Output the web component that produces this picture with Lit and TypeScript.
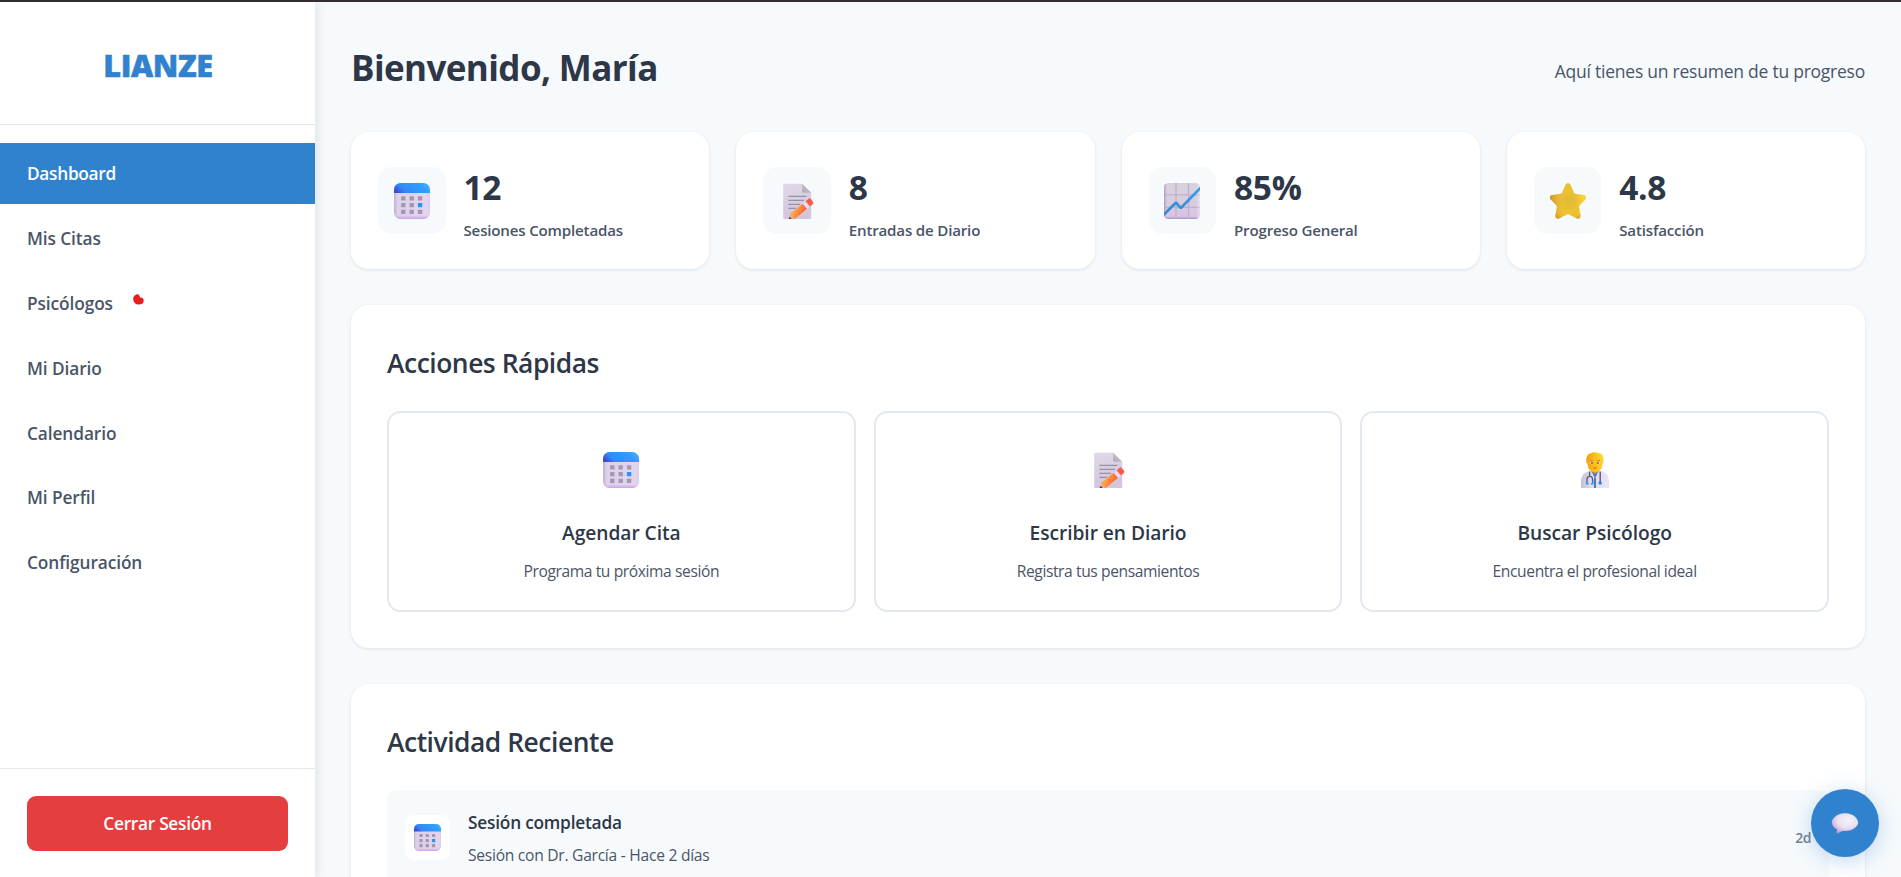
import { LitElement, html, css, svg } from "lit";
import { customElement, property } from "lit/decorators.js";
import { classMap } from "lit/directives/class-map.js";

type IconName = "calendar" | "memo" | "chart" | "star" | "doctor" | "bubble";

const calendarDots = [0, 1, 2].flatMap((r) =>
  [0, 1, 2].map((c) => ({ x: 7.1 + c * 8.4, y: 13.2 + r * 6.8, today: r === 1 && c === 2 }))
);

const glyphs: Record<IconName, unknown> = {
  calendar: svg`
    <defs>
      <linearGradient id="head" x1="0" y1="0.6" x2="1" y2="0.3">
        <stop offset="0" stop-color="#3a4fcf" /><stop offset="0.22" stop-color="#3387f6" />
        <stop offset="0.8" stop-color="#2fa0ff" /><stop offset="1" stop-color="#3fb8fb" />
      </linearGradient>
      <linearGradient id="sheet" x1="0" y1="0" x2="1" y2="0">
        <stop offset="0" stop-color="#bdb2cb" /><stop offset="0.1" stop-color="#dcd2ea" />
        <stop offset="0.9" stop-color="#e3d5ee" /><stop offset="1" stop-color="#ddcdea" />
      </linearGradient>
      <linearGradient id="foot" x1="0" y1="0" x2="0" y2="1">
        <stop offset="0.9" stop-color="#cf9fea" stop-opacity="0" /><stop offset="1" stop-color="#cf9fea" />
      </linearGradient>
      <clipPath id="round"><rect width="36" height="36" rx="6.5" /></clipPath>
    </defs>
    <g clip-path="url(#round)">
      <rect width="36" height="36" fill="url(#sheet)" />
      <rect width="36" height="36" fill="url(#foot)" />
      <rect width="36" height="10" fill="url(#head)" />
    </g>
    ${calendarDots.map(
      (d) => svg`<rect x=${d.x} y=${d.y} width="4.4" height="4.2" rx="0.5" fill=${d.today ? "#2c93f3" : "#a597b4"} />`
    )}`,
  memo: svg`
    <defs>
      <linearGradient id="page" x1="0" y1="0" x2="0.2" y2="1">
        <stop offset="0" stop-color="#e0d9e8" /><stop offset="1" stop-color="#d2c5dc" />
      </linearGradient>
      <linearGradient id="fold" x1="0" y1="1" x2="1" y2="0">
        <stop offset="0" stop-color="#aea6b6" /><stop offset="1" stop-color="#d3ccda" />
      </linearGradient>
      <linearGradient id="wood" x1="0" y1="0" x2="1" y2="1">
        <stop offset="0.2" stop-color="#ffa348" /><stop offset="0.85" stop-color="#fb6b2e" />
      </linearGradient>
      <clipPath id="memo-area"><rect width="36" height="36" /></clipPath>
    </defs>
    <path d="M5.2 0.7H23.2L32.2 9.7V35a1 1 0 0 1-1 1H5.2a1 1 0 0 1-1-1V1.7a1 1 0 0 1 1-1Z" fill="url(#page)" />
    <path d="M23.2 0.7L32.2 9.7H24.2a1 1 0 0 1-1-1Z" fill="url(#fold)" />
    <path d="M9.4 13.4H27.4M9.4 17.4H25M9.4 21.4H21M9.4 25.4H17" stroke="#9890a3" stroke-width="1.1" />
    <g clip-path="url(#memo-area)">
      <g transform="translate(9.6 36.6) rotate(-39.5)">
        <path d="M0 0L5.6-3.4V3.4Z" fill="#e3ab98" />
        <path d="M0 0L2.6-1.6V1.6Z" fill="#50273f" />
        <rect x="5" y="-3.4" width="16.2" height="6.8" fill="url(#wood)" />
        <rect x="21" y="-3.4" width="3.8" height="6.8" fill="#e9dcf5" />
        <path d="M24.8-3.4h3.6a1.9 1.9 0 0 1 1.9 1.9V1.5a1.9 1.9 0 0 1-1.9 1.9H24.8Z" fill="#fb5b4c" />
      </g>
    </g>`,
  chart: svg`
    <defs>
      <linearGradient id="paper" x1="0" y1="0" x2="0" y2="1">
        <stop offset="0" stop-color="#d8d2dd" /><stop offset="0.4" stop-color="#d8cee2" />
        <stop offset="0.93" stop-color="#d6c4e3" /><stop offset="1" stop-color="#ad8cc9" />
      </linearGradient>
      <linearGradient id="edge" x1="0" y1="0" x2="1" y2="0">
        <stop offset="0" stop-color="#a79bb0" stop-opacity="0.9" /><stop offset="0.09" stop-color="#b7acc0" stop-opacity="0" />
        <stop offset="0.9" stop-color="#fff" stop-opacity="0" /><stop offset="1" stop-color="#efe7f4" stop-opacity="0.6" />
      </linearGradient>
      <linearGradient id="trend" x1="0" y1="1" x2="1" y2="0">
        <stop offset="0" stop-color="#3a83cf" /><stop offset="1" stop-color="#31a2ea" />
      </linearGradient>
      <clipPath id="tile"><rect width="36" height="36" rx="4.6" /></clipPath>
    </defs>
    <g clip-path="url(#tile)">
      <rect width="36" height="36" fill="url(#paper)" />
      <path d="M12 0V36M24.6 0V36M0 11.8H36M0 24.4H36" stroke="#bdb1c8" stroke-width="1.3" />
      <rect width="36" height="36" fill="url(#edge)" />
      <path d="M-1 32.4L11.3 20.2Q12 19.6 12.7 20.3L16 24.2Q16.8 25 17.6 24.2L37 4.4" fill="none" stroke="url(#trend)" stroke-width="2.7" />
    </g>`,
  star: svg`
    <defs>
      <radialGradient id="gold" cx="0.52" cy="0.5" r="0.55">
        <stop offset="0" stop-color="#dfba36" /><stop offset="0.55" stop-color="#edc233" />
        <stop offset="0.85" stop-color="#eebd33" /><stop offset="1" stop-color="#d79f30" />
      </radialGradient>
      <linearGradient id="shade" x1="0" y1="0" x2="1" y2="0">
        <stop offset="0" stop-color="#c48a2c" stop-opacity="0.75" /><stop offset="0.35" stop-color="#d9a52f" stop-opacity="0" />
        <stop offset="0.75" stop-color="#ffe23c" stop-opacity="0" /><stop offset="1" stop-color="#ffe838" stop-opacity="0.7" />
      </linearGradient>
    </defs>
    <path d="M15.4 2C16.4-0.5 19.6-0.5 20.6 2L24 9.6Q24.6 10.8 25.9 11L33.7 12C36.2 12.4 36.8 15 35 16.8L29.8 22.3Q28.9 23.3 29.2 24.6L30.6 32.2C31 35.2 28.6 36.6 26.2 35.3L19.5 31.7Q18 30.9 16.5 31.7L9.8 35.3C7.4 36.6 5 35.2 5.4 32.2L6.8 24.6Q7.1 23.3 6.2 22.3L1 16.8C-0.8 15-0.2 12.4 2.3 12L10.1 11Q11.4 10.8 12 9.6Z" fill="url(#gold)" />
    <path d="M15.4 2C16.4-0.5 19.6-0.5 20.6 2L24 9.6Q24.6 10.8 25.9 11L33.7 12C36.2 12.4 36.8 15 35 16.8L29.8 22.3Q28.9 23.3 29.2 24.6L30.6 32.2C31 35.2 28.6 36.6 26.2 35.3L19.5 31.7Q18 30.9 16.5 31.7L9.8 35.3C7.4 36.6 5 35.2 5.4 32.2L6.8 24.6Q7.1 23.3 6.2 22.3L1 16.8C-0.8 15-0.2 12.4 2.3 12L10.1 11Q11.4 10.8 12 9.6Z" fill="url(#shade)" />`,
  doctor: svg`
    <defs>
      <linearGradient id="coat" x1="0" y1="0" x2="1" y2="0">
        <stop offset="0" stop-color="#c6bfd6" /><stop offset="0.35" stop-color="#e0daec" /><stop offset="1" stop-color="#ece3f6" />
      </linearGradient>
      <linearGradient id="skin" x1="0" y1="0" x2="1" y2="0">
        <stop offset="0" stop-color="#f2a320" /><stop offset="0.5" stop-color="#fdc01c" /><stop offset="1" stop-color="#ffcb2e" />
      </linearGradient>
      <linearGradient id="hair" x1="0" y1="0" x2="1" y2="0">
        <stop offset="0" stop-color="#f39c1a" /><stop offset="0.6" stop-color="#ffc61f" /><stop offset="1" stop-color="#ffd93a" />
      </linearGradient>
    </defs>
    <path d="M4 36V29.5C4 23.5 8 20 12 19.3H24C28.5 20 32 23.5 32 29.5V36Z" fill="url(#coat)" />
    <path d="M14.4 19L18 26.5L21.6 19Z" fill="#2f86c8" />
    <path d="M18 26V36" stroke="#3868b4" stroke-width="1.7" />
    <path d="M14.6 17H21.4V19.5L18 22L14.6 19.5Z" fill="#e99120" />
    <path d="M10.6 9C10.6 3.5 13.5 2 18 2S25.4 3.5 25.4 9V12C25.4 17.5 22 20 18 20S10.6 17.5 10.6 12Z" fill="url(#skin)" />
    <path d="M9.6 11.5C8.6 5 10.3 1.4 14.2 1.2Q14.6 0.4 15.8 0.6Q18 0 19.6 0.7Q20.6 0 21.4 0.9C25.6 1 27.4 5 26.4 11.5H25.2Q25.2 7.6 22.6 6Q18 7.6 13.4 6Q10.8 7.6 10.8 11.5Z" fill="url(#hair)" />
    <path d="M13 8.9Q14.3 8.1 15.6 8.8M20.4 8.8Q21.7 8.1 23 8.9" fill="none" stroke="#c8641d" stroke-width="0.9" />
    <circle cx="14.8" cy="11" r="1.3" fill="#fff" /><circle cx="21.2" cy="11" r="1.3" fill="#fff" />
    <circle cx="15" cy="11" r="0.9" fill="#60403c" /><circle cx="21" cy="11" r="0.9" fill="#60403c" />
    <path d="M16.2 15.8Q18 15 19.8 15.8Q18 17.6 16.2 15.8Z" fill="#c4403c" />
    <path d="M12.6 19.6V24M23.2 19.6V30" fill="none" stroke="#5f5782" stroke-width="1.4" />
    <path d="M10 30.5V27.5Q10 24.4 12.7 24.4T15.6 27.5V30.5" fill="none" stroke="#5f5782" stroke-width="1.3" />
    <path d="M9.8 29.2V31.8H11.6M15.8 29.2V31.8H14" fill="none" stroke="#2998ec" stroke-width="1.5" />
    <circle cx="23.2" cy="31" r="1.7" fill="#2785da" />`,
  bubble: svg`
    <defs>
      <radialGradient id="puff" cx="0.6" cy="0.35" r="0.7">
        <stop offset="0" stop-color="#f6f1fa" /><stop offset="0.55" stop-color="#e9e0f1" />
        <stop offset="0.85" stop-color="#cdb5dd" /><stop offset="1" stop-color="#b99bd0" />
      </radialGradient>
    </defs>
    <path d="M18 8.2C27 8.2 31.2 14.3 31.2 17.4C31.2 21 26.5 25.9 18 25.9H15.5L10.4 28.4Q9.4 28.6 9.7 27.4L9.9 24.3C6.6 22.6 4.8 19.6 4.8 17.4C4.8 14.3 9 8.2 18 8.2Z" fill="url(#puff)" />`,
};

@customElement("emoji-icon")
export class EmojiIcon extends LitElement {
  static styles = css`
    :host { display: block; width: 36px; height: 36px; }
    .glyph { display: block; width: 100%; height: 100%; }
  `;
  @property() name: IconName = "calendar";
  render() {
    return html`<svg class="glyph" viewBox="0 0 36 36" aria-hidden="true">${glyphs[this.name]}</svg>`;
  }
}

const navItems = ["Dashboard", "Mis Citas", "Psicólogos", "Mi Diario", "Calendario", "Mi Perfil", "Configuración"];

const stats: { icon: IconName; value: string; label: string }[] = [
  { icon: "calendar", value: "12", label: "Sesiones Completadas" },
  { icon: "memo", value: "8", label: "Entradas de Diario" },
  { icon: "chart", value: "85%", label: "Progreso General" },
  { icon: "star", value: "4.8", label: "Satisfacción" },
];

const actions: { icon: IconName; title: string; text: string }[] = [
  { icon: "calendar", title: "Agendar Cita", text: "Programa tu próxima sesión" },
  { icon: "memo", title: "Escribir en Diario", text: "Registra tus pensamientos" },
  { icon: "doctor", title: "Buscar Psicólogo", text: "Encuentra el profesional ideal" },
];

@customElement("app-root")
export class AppRoot extends LitElement {
  static styles = css`
    :host {
      display: block;
      font-family: "Open Sans", "Noto Sans", sans-serif;
      color: #2d3748;
    }
    * { box-sizing: border-box; margin: 0; }
    .shell {
      position: relative;
      display: grid;
      grid-template-columns: 315px 1fr;
      grid-template-rows: 875px;
      height: 877px;
      overflow: hidden;
      border-top: 2px solid #322d33;
      background: #f7fafc;
    }

    .sidebar {
      z-index: 1;
      display: flex;
      flex-direction: column;
      background: #fff;
      box-shadow: 2px 0 11px rgba(0, 0, 0, 0.1);
    }
    .brand {
      display: flex;
      align-items: center;
      justify-content: center;
      height: 123px;
      padding: 3px 0 0 1px;
      border-bottom: 1px solid #e2e8f0;
      font-size: 30.6px;
      font-weight: 800;
      letter-spacing: -0.4px;
      -webkit-text-stroke: 0.5px #3182ce;
      color: #3182ce;
    }
    .nav {
      display: flex;
      flex: 1;
      flex-direction: column;
      gap: 4.05px;
      padding-top: 18px;
    }
    .nav-item {
      display: flex;
      align-items: center;
      height: 60.75px;
      padding: 1px 27px 0;
      font-size: 17.3px;
      font-weight: 600;
      letter-spacing: -0.1px;
      color: #4a5568;
    }
    .nav-item.active { padding-top: 0; background: #3182ce; color: #fff; letter-spacing: -0.3px; }
    .mark { width: 11px; height: 11px; margin: -7px 0 0 20px; }
    .sidebar-foot { padding: 27px 27px 26px; border-top: 1px solid #e2e8f0; }
    .logout {
      display: block;
      width: 100%;
      height: 55px;
      border: 0;
      border-radius: 9px;
      background: #e53e3e;
      color: #fff;
      font: 600 17.3px "Open Sans", sans-serif;
      letter-spacing: -0.28px;
    }

    .main {
      display: flex;
      flex-direction: column;
      gap: 36px;
      min-width: 0;
      padding: 40px 36px 0;
    }
    .top { display: flex; align-items: center; justify-content: space-between; margin-bottom: 3px; }
    .hello { font-size: 35px; font-weight: 700; line-height: 51px; letter-spacing: -0.6px; }
    .summary {
      margin-top: 6px;
      font-size: 17.5px;
      line-height: 24px;
      letter-spacing: -0.24px;
      color: #4a5568;
    }

    .stats { display: grid; grid-template-columns: repeat(4, 1fr); gap: 27px; }
    .stat, .panel {
      border-radius: 18px;
      background: #fff;
      box-shadow: 0 1px 3.5px rgba(0, 0, 0, 0.1);
    }
    .stat { display: flex; align-items: center; gap: 18px; height: 137px; padding: 27px; }
    .stat-icon {
      display: grid;
      place-items: center;
      width: 67.5px;
      height: 67.5px;
      border-radius: 13.5px;
      background: #f7fafc;
    }
    .stat-text { align-self: flex-start; }
    .value { font-size: 33.5px; font-weight: 700; line-height: 56px; letter-spacing: -0.3px; }
    .label {
      margin-top: 2px;
      font-size: 15.1px;
      font-weight: 600;
      line-height: 26px;
      letter-spacing: -0.18px;
      color: #4a5568;
    }

    .panel { flex: none; padding: 36px; }
    .panel-title {
      margin-bottom: 26px;
      padding-top: 1px;
      font-size: 26.4px;
      font-weight: 560;
      line-height: 43px;
      letter-spacing: -0.46px;
    }
    .actions { display: grid; grid-template-columns: repeat(3, 1fr); gap: 18px; }
    .action {
      display: flex;
      flex-direction: column;
      align-items: center;
      height: 201px;
      padding-top: 39px;
      border: 2px solid #e2e8f0;
      border-radius: 13.5px;
    }
    .action-title { margin-top: 29.5px; font-size: 19.2px; font-weight: 600; line-height: 30px; letter-spacing: -0.05px; }
    .action-text {
      margin-top: 11px;
      font-size: 15.6px;
      line-height: 24px;
      letter-spacing: -0.4px;
      color: #4a5568;
    }

    .entry {
      display: flex;
      align-items: center;
      gap: 18px;
      height: 95px;
      padding: 0 18px;
      border-radius: 9px;
      background: #f7fafc;
    }
    .entry-icon {
      display: grid;
      place-items: center;
      width: 45px;
      height: 45px;
      border-radius: 9px;
      background: #fff;
    }
    .small { width: 27px; height: 27px; }
    .entry-text { display: flex; flex: 1; flex-direction: column; gap: 8px; padding-top: 2px; line-height: 24px; }
    .entry-title { font-size: 17.3px; font-weight: 600; letter-spacing: -0.22px; }
    .entry-desc { font-size: 15.6px; letter-spacing: -0.26px; color: #4a5568; }
    .ago { font-size: 14px; font-weight: 600; line-height: 20px; letter-spacing: -0.5px; color: #718096; }

    .chat {
      position: absolute;
      right: 22px;
      bottom: 20px;
      z-index: 2;
      display: grid;
      place-items: center;
      width: 68px;
      height: 68px;
      border: 0;
      border-radius: 50%;
      background: #3182ce;
      box-shadow: 0 4.5px 22px rgba(49, 130, 206, 0.3);
    }
  `;

  render() {
    return html`
      <div class="shell">
        <aside class="sidebar">
          <div class="brand">LIANZE</div>
          <nav class="nav">
            ${navItems.map(
              (item, i) => html`<a class=${classMap({ "nav-item": true, active: i === 0 })}>${item}${
                item === "Psicólogos"
                  ? html`<svg class="mark" viewBox="0 0 11 11" aria-hidden="true">
                      <path d="M0.3 5.4C0 3.2 0.9 1.9 2.2 1.3C3.2-0.2 6 0 6.6 2C6.8 2.8 6.8 3.4 7.4 3.7C9 3.3 10.7 4.4 10.7 6.8C10.6 9.4 8.4 10.6 6 10.6C3 10.6 0.6 8.6 0.3 5.4Z" fill="#ea1c1e" />
                    </svg>`
                  : ""
              }</a>`
            )}
          </nav>
          <div class="sidebar-foot"><button class="logout">Cerrar Sesión</button></div>
        </aside>

        <main class="main">
          <header class="top">
            <h1 class="hello">Bienvenido, María</h1>
            <p class="summary">Aquí tienes un resumen de tu progreso</p>
          </header>

          <section class="stats">
            ${stats.map(
              (s) => html`<article class="stat">
                <div class="stat-icon"><emoji-icon name=${s.icon}></emoji-icon></div>
                <div class="stat-text">
                  <div class="value">${s.value}</div>
                  <div class="label">${s.label}</div>
                </div>
              </article>`
            )}
          </section>

          <section class="panel">
            <h2 class="panel-title">Acciones Rápidas</h2>
            <div class="actions">
              ${actions.map(
                (a) => html`<article class="action">
                  <emoji-icon name=${a.icon}></emoji-icon>
                  <h3 class="action-title">${a.title}</h3>
                  <p class="action-text">${a.text}</p>
                </article>`
              )}
            </div>
          </section>

          <section class="panel">
            <h2 class="panel-title">Actividad Reciente</h2>
            <article class="entry">
              <div class="entry-icon"><emoji-icon class="small" name="calendar"></emoji-icon></div>
              <div class="entry-text">
                <h4 class="entry-title">Sesión completada</h4>
                <p class="entry-desc">Sesión con Dr. García - Hace 2 días</p>
              </div>
              <span class="ago">2d</span>
            </article>
          </section>
        </main>

        <button class="chat" aria-label="Chat"><emoji-icon name="bubble"></emoji-icon></button>
      </div>
    `;
  }
}
